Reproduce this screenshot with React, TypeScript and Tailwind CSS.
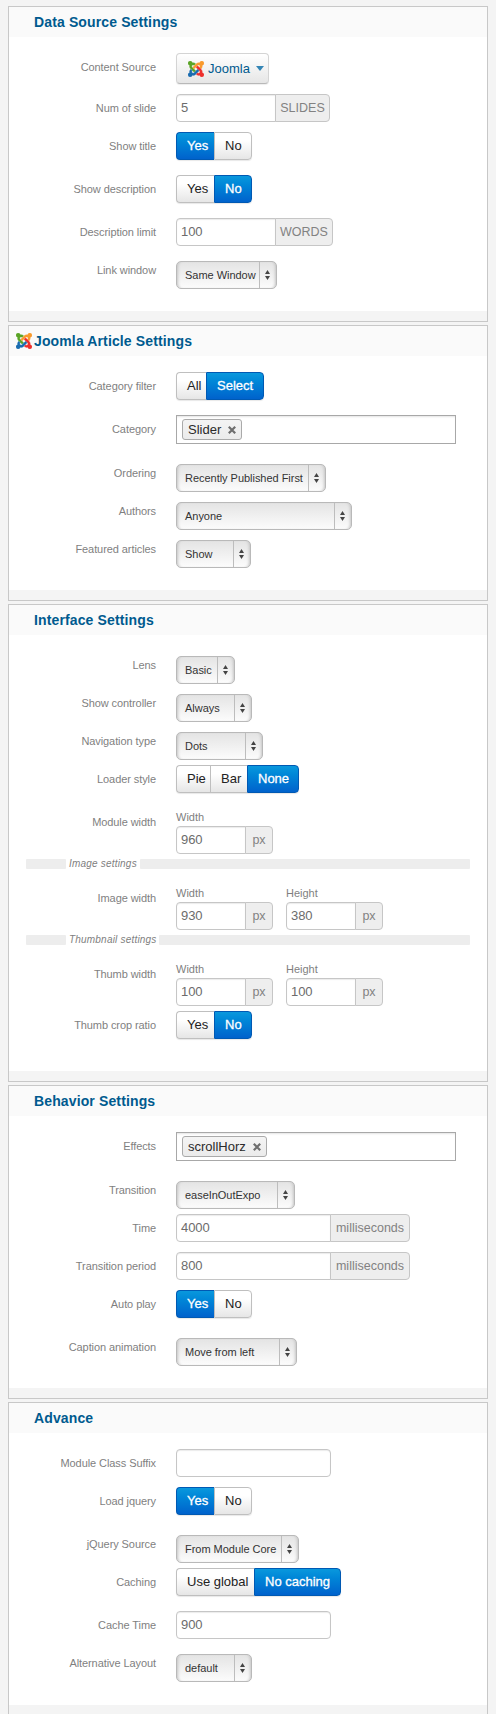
import type { ReactNode } from "react";

function JoomlaLogo() {
  return (
    <svg viewBox="0 32 448 448" className="h-4 w-4 shrink-0">
      <path fill="#5aa426" stroke="#5aa426" strokeWidth="10" d="M.6 92.1C.6 58.8 27.4 32 60.4 32c30 0 54.5 21.9 59.2 50.2 32.6-7.6 67.1.6 96.5 30l-44.3 44.3c-20.5-20.5-42.6-16.3-55.4-3.5-14.3 14.3-14.3 37.9 0 52.2l99.5 99.5-44 44.3c-87.7-87.2-49.7-49.7-99.8-99.7-26.8-26.5-35-64.8-24.8-98.9C20.4 144.6.6 120.7.6 92.1z" />
      <path fill="#f99a2c" stroke="#f99a2c" strokeWidth="10" d="M130.1 208.5l44.3 44.3c10-10 89.7-89.7 99.7-99.8 14.3-14.3 37.6-14.3 51.9 0 12.8 12.8 17 35-3.5 55.4l44 44.3c31.2-31.2 38.5-67.6 28.9-101.2 29.2-4.1 51.9-29.2 51.9-59.5 0-33.2-26.8-60.1-59.8-60.1-30.3 0-55.4 22.5-59.5 51.6-33.8-9.9-71.7-1.5-98.3 25.1-18.3 19.1-71.1 71.5-99.6 99.9z" />
      <path fill="#ee2f2c" stroke="#ee2f2c" strokeWidth="10" d="M396.4 360.7c8.2-32.7-.9-68.5-26.3-93.9-11.8-12.2 5 4.7-99.5-99.7l-44.3 44.3 99.7 99.7c14.3 14.3 14.3 37.6 0 51.9-12.8 12.8-35 17-55.4-3.5l-44 44.3c27.6 30.2 68 38.8 102.7 28 5.5 27.4 29.7 48.1 58.9 48.1 33 0 59.8-26.8 59.8-60.1 0-30.2-22.5-55-51.6-59.1z" />
      <path fill="#1a6cb0" stroke="#1a6cb0" strokeWidth="10" d="M312.1 307.6l-44-44.3c-87 86.4-50.4 50.4-99.7 99.8-14.3 14.3-37.6 14.3-51.9 0-13.1-13.4-16.9-35.3 3.2-55.4l-44-44.3c-30.2 30.2-38 65.2-29.5 98.3-26.7 6-46.2 29.9-46.2 58.2C0 453.2 26.8 480 59.8 480c28.6 0 52.5-19.8 58.6-46.7 32.7 8.2 68.5-.6 94.2-26 32.1-32 12.2-12.4 99.5-99.7z" />
    </svg>
  );
}

function Panel({ title, className, logo, children }: { title: string; className: string; logo?: boolean; children: ReactNode }) {
  return (
    <section className={`flex shrink-0 flex-col border border-[#c8c8c8] bg-white ${className}`}>
      <header className="flex h-[30px] shrink-0 items-center bg-[#fafafa] pb-px pl-[7px]">
        <span className="flex w-[18px] shrink-0">{logo && <JoomlaLogo />}</span>
        <h2 className="text-[14px] leading-4 font-bold tracking-[0.13px] text-[#005a8f]">{title}</h2>
      </header>
      <div className="flex grow flex-col pt-px">{children}</div>
      <footer className="h-[10px] shrink-0 bg-[#f4f4f4]" />
    </section>
  );
}

function Row({ label, className, labelClass = "mt-[6px]", children }: { label: string; className: string; labelClass?: string; children: ReactNode }) {
  return (
    <div className={`flex items-start ${className}`}>
      <span className={`w-[147px] shrink-0 text-right text-[11px] leading-4 tracking-[-0.08px] whitespace-nowrap text-[#7f7f7f] ${labelClass}`}>{label}</span>
      <div className="ml-5 flex">{children}</div>
    </div>
  );
}

function SelectRow({ label, value, className, width }: { label: string; value: string; className: string; width: string }) {
  return (
    <Row label={label} className={className} labelClass="mt-[1px]">
      <div className={`flex h-7 items-stretch overflow-hidden rounded-[5px] border border-[#b9b9b9] bg-linear-to-b from-[#e4e4e4] to-[#fcfcfc] shadow-[inset_3px_0_3px_-2px_#c4c4c4,inset_-3px_0_3px_-2px_#c4c4c4] ${width}`}>
        <span className="grow pl-2 text-[11px] leading-[27px] tracking-[-0.03px] whitespace-nowrap text-[#333]">{value}</span>
        <span className="flex w-[17px] shrink-0 items-center justify-center border-l border-[#bdbdbd] pr-px">
          <svg viewBox="0 0 5 10" className="h-[10px] w-[5px]" fill="#444">
            <path d="M2.5 0 5 4H0zM0 6h5L2.5 10z" />
          </svg>
        </span>
      </div>
    </Row>
  );
}

function Field({ value, unit, inputWidth, unitWidth = "" }: { value: string; unit?: string; inputWidth: string; unitWidth?: string }) {
  return (
    <div className="flex h-7">
      <div className={`border border-[#c6c6c6] pl-1 text-[13px] leading-[25px] tracking-[-0.1px] text-[#6c6c6c] shadow-[inset_0_1px_1px_#ececec] ${unit ? "rounded-l-[4px]" : "rounded-[4px]"} ${inputWidth}`}>{value}</div>
      {unit && (
        <div className={`-ml-px rounded-r-[4px] border border-[#c6c6c6] bg-[#eeeeee] text-center text-[12.5px] leading-[27px] text-[#828282] ${unitWidth}`}>{unit}</div>
      )}
    </div>
  );
}

function Toggle({ options }: { options: { text: string; width: string; active?: boolean }[] }) {
  return (
    <div className="flex h-7 rounded-[4px] shadow-[0_1px_1px_#e8e8e8]">
      {options.map((o) => (
        <span
          key={o.text}
          className={`border-y text-[13px] leading-[25px] whitespace-nowrap first:rounded-l-[4px] last:rounded-r-[4px] last:border-r ${
            o.active
              ? "border-l border-[#0059b3] bg-linear-to-b from-[#0a98dd] to-[#0062cc] pl-[10px] text-white [-webkit-text-stroke:0.3px_white]"
              : "border-l border-[#bfbfbf] bg-linear-to-b from-white from-30% to-[#e6e6e6] pl-[10px] text-[#222]"
          } ${o.width}`}
        >
          {o.text}
        </span>
      ))}
    </div>
  );
}

function YesNo({ yes }: { yes?: boolean }) {
  return (
    <Toggle
      options={[
        { text: "Yes", width: "w-[38px]", active: yes },
        { text: "No", width: "w-[38px]", active: !yes },
      ]}
    />
  );
}

function Chips({ text, width }: { text: string; width: string }) {
  return (
    <div className="flex h-[29px] w-[280px] border border-[#a8a8a8] bg-white pt-[3px] pl-[5px] shadow-[inset_0_2px_2px_-1px_#e4e4e4]">
      <span className={`flex h-[21px] items-center justify-between rounded-[3px] border border-[#aaa] bg-linear-to-b from-[#f4f4f4] to-[#ebebeb] pr-[5px] pl-[5px] text-[13px] leading-[19px] text-[#2a2a2a] ${width}`}>
        {text}
        <svg viewBox="0 0 8 8" className="h-2 w-2" stroke="#6e6e6e" strokeWidth="2.2">
          <path d="M.8.8 7.2 7.2M7.2.8.8 7.2" />
        </svg>
      </span>
    </div>
  );
}

function Dimension({ name, value }: { name: string; value: string }) {
  return (
    <div className="w-[110px]">
      <div className="h-[17px] text-[11px] leading-4 text-[#7f7f7f]">{name}</div>
      <Field value={value} unit="px" inputWidth="w-[70px]" unitWidth="w-[28px]" />
    </div>
  );
}

function Divider({ text, width }: { text: string; width: string }) {
  return (
    <div className="mx-[17px] mt-[5px] flex h-[10px]">
      <span className="w-10 rounded-[1px] bg-[#ededed]" />
      <span className={`pl-[3px] text-[10px] leading-[9px] tracking-[0.2px] whitespace-nowrap text-[#808080] italic ${width}`}>{text}</span>
      <span className="grow rounded-[1px] bg-[#ededed]" />
    </div>
  );
}

export default function App() {
  return (
    <main className="flex h-[1714px] w-[496px] flex-col gap-[3px] overflow-hidden bg-[#f4f4f4] pt-[6px] pl-2 font-['Liberation_Sans',Arial,sans-serif] [&>section]:w-[480px]">
      <Panel title="Data Source Settings" className="h-[316px]">
        <Row label="Content Source" className="mt-[15px]">
          <div className="flex h-[31px] w-[93px] items-center rounded-[4px] border border-[#d4d4d4] border-b-[#b8b8b8] bg-linear-to-b from-white to-[#e6e6e6] pl-[11px] shadow-[0_1px_1px_#eeeeee]">
            <JoomlaLogo />
            <span className="ml-1 text-[13px] leading-4 text-[#005a8f]">Joomla</span>
            <svg viewBox="0 0 8 5" className="ml-[6px] h-[5px] w-2" fill="#3485b5">
              <path d="M0 0h8L4 5z" />
            </svg>
          </div>
        </Row>
        <Row label="Num of slide" className="mt-[10px]">
          <Field value="5" unit="SLIDES" inputWidth="w-[100px]" unitWidth="w-[55px]" />
        </Row>
        <Row label="Show title" className="mt-[10px]"><YesNo yes /></Row>
        <Row label="Show description" className="mt-[15px]"><YesNo /></Row>
        <Row label="Description limit" className="mt-[15px]">
          <Field value="100" unit="WORDS" inputWidth="w-[100px]" unitWidth="w-[58px]" />
        </Row>
        <SelectRow label="Link window" value="Same Window" className="mt-[15px]" width="w-[101px]" />
      </Panel>

      <Panel title="Joomla Article Settings" logo className="h-[276px]">
        <Row label="Category filter" className="mt-[15px]">
          <Toggle options={[{ text: "All", width: "w-[30px]" }, { text: "Select", width: "w-[58px]", active: true }]} />
        </Row>
        <Row label="Category" className="mt-[15px]"><Chips text="Slider" width="w-[60px]" /></Row>
        <SelectRow label="Ordering" value="Recently Published First" className="mt-[20px]" width="w-[150px]" />
        <SelectRow label="Authors" value="Anyone" className="mt-[10px]" width="w-[176px]" />
        <SelectRow label="Featured articles" value="Show" className="mt-[10px]" width="w-[75px]" />
      </Panel>

      <Panel title="Interface Settings" className="h-[478px]">
        <SelectRow label="Lens" value="Basic" className="mt-[20px]" width="w-[59px]" />
        <SelectRow label="Show controller" value="Always" className="mt-[10px]" width="w-[76px]" />
        <SelectRow label="Navigation type" value="Dots" className="mt-[10px]" width="w-[87px]" />
        <Row label="Loader style" className="mt-[5px]">
          <Toggle options={[{ text: "Pie", width: "w-[34px]" }, { text: "Bar", width: "w-[37px]" }, { text: "None", width: "w-[52px]", active: true }]} />
        </Row>
        <Row label="Module width" className="mt-[16px]" labelClass="mt-[5px]"><Dimension name="Width" value="960" /></Row>
        <Divider text="Image settings" width="w-[74px]" />
        <Row label="Image width" className="mt-[16px]" labelClass="mt-[5px]">
          <Dimension name="Width" value="930" />
          <Dimension name="Height" value="380" />
        </Row>
        <Divider text="Thumbnail settings" width="w-[93px]" />
        <Row label="Thumb width" className="mt-[16px]" labelClass="mt-[5px]">
          <Dimension name="Width" value="100" />
          <Dimension name="Height" value="100" />
        </Row>
        <Row label="Thumb crop ratio" className="mt-[5px]"><YesNo /></Row>
      </Panel>

      <Panel title="Behavior Settings" className="h-[314px]">
        <Row label="Effects" className="mt-[15px]"><Chips text="scrollHorz" width="w-[85px]" /></Row>
        <SelectRow label="Transition" value="easeInOutExpo" className="mt-[20px]" width="w-[119px]" />
        <Row label="Time" className="mt-[5px]">
          <Field value="4000" unit="milliseconds" inputWidth="w-[155px]" unitWidth="w-[80px]" />
        </Row>
        <Row label="Transition period" className="mt-[10px]">
          <Field value="800" unit="milliseconds" inputWidth="w-[155px]" unitWidth="w-[80px]" />
        </Row>
        <Row label="Auto play" className="mt-[10px]"><YesNo yes /></Row>
        <SelectRow label="Caption animation" value="Move from left" className="mt-[20px]" width="w-[121px]" />
      </Panel>

      <Panel title="Advance" className="h-[314px]">
        <Row label="Module Class Suffix" className="mt-[15px]"><Field value="" inputWidth="w-[155px]" /></Row>
        <Row label="Load jquery" className="mt-[10px]"><YesNo yes /></Row>
        <SelectRow label="jQuery Source" value="From Module Core" className="mt-[20px]" width="w-[123px]" />
        <Row label="Caching" className="mt-[5px]">
          <Toggle options={[{ text: "Use global", width: "w-[78px]" }, { text: "No caching", width: "w-[87px]", active: true }]} />
        </Row>
        <Row label="Cache Time" className="mt-[15px]"><Field value="900" inputWidth="w-[155px]" /></Row>
        <SelectRow label="Alternative Layout" value="default" className="mt-[15px]" width="w-[76px]" />
      </Panel>
    </main>
  );
}
